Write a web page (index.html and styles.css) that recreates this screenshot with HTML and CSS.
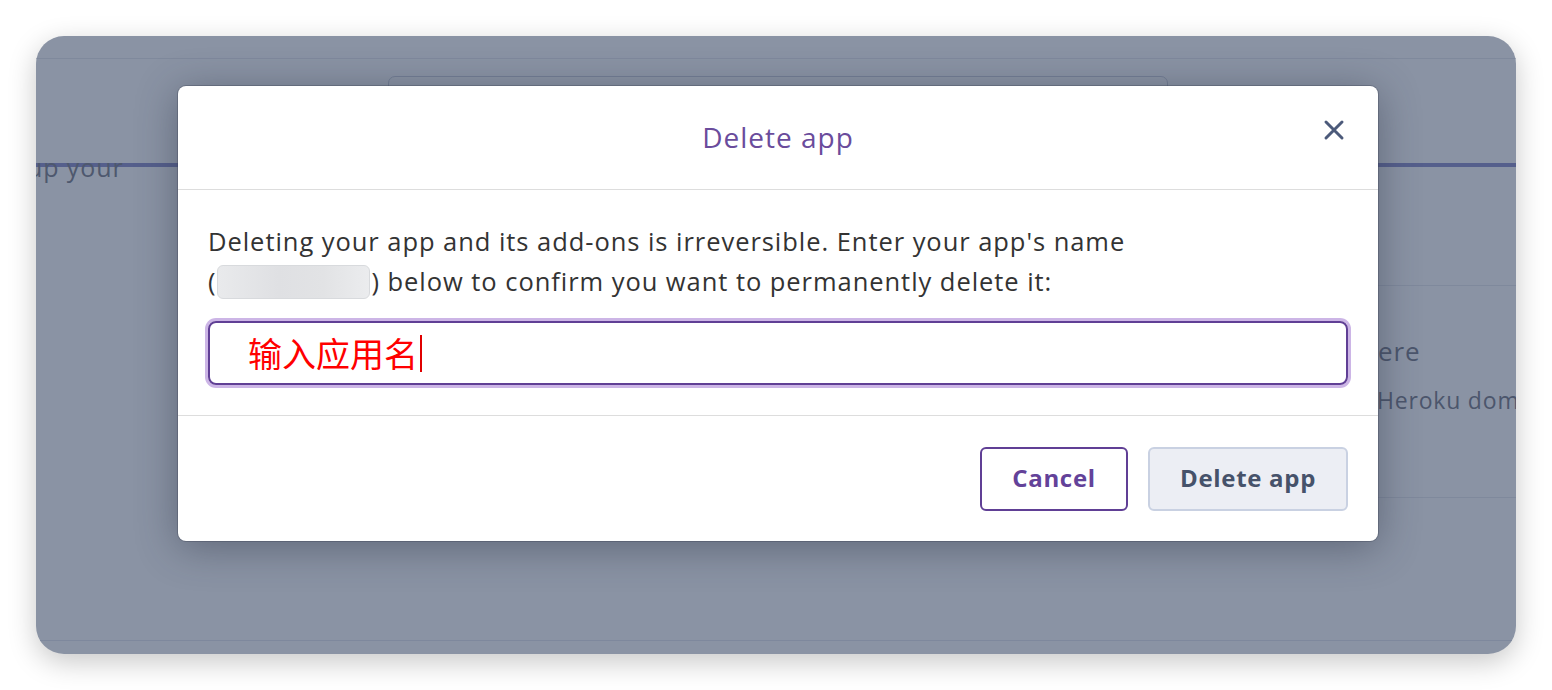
FILE: index.html
```html
<!DOCTYPE html>
<html lang="en">
<head>
<meta charset="utf-8">
<title>Delete app</title>
<link rel="stylesheet" href="styles.css">
</head>
<body>
<div class="window">
  <div class="bg">
    <div class="bg-top"></div>
    <div class="bg-search"></div>
    <div class="bg-heading"><span class="bg-text">up your</span></div>
    <div class="bg-main">
      <div class="bg-panel">
        <div class="bg-panel-title">ere</div>
        <div class="bg-panel-sub">Heroku dom</div>
      </div>
    </div>
    <div class="bg-bottom"></div>
  </div>

  <div class="modal" role="dialog" aria-labelledby="modal-title">
    <div class="modal-header">
      <h2 id="modal-title" class="modal-title">Delete app</h2>
      <button class="close" aria-label="Close">
        <svg width="22" height="22" viewBox="0 0 22 22"><path d="M3 3L19 19M19 3L3 19" stroke="#4c5a7a" stroke-width="3" stroke-linecap="round"/></svg>
      </button>
    </div>
    <div class="modal-body">
      <p class="msg">Deleting your app and its add-ons is irreversible. Enter your app's name<br>(<span class="redacted"></span>) below to confirm you want to permanently delete it:</p>
      <div class="input" role="textbox"><span class="typed">输入应用名</span><span class="caret"></span></div>
    </div>
    <div class="modal-footer">
      <button class="btn btn-cancel">Cancel</button>
      <button class="btn btn-delete">Delete app</button>
    </div>
  </div>
</div>
</body>
</html>
```

FILE: styles.css
```css
html, body {
  margin: 0;
  padding: 0;
  background: #ffffff;
}
body {
  width: 1552px;
  height: 690px;
  overflow: hidden;
  font-family: "Open Sans", "Noto Sans", "Noto Sans CJK SC", sans-serif;
}
.window {
  position: relative;
  margin: 36px;
  width: 1480px;
  height: 618px;
  border-radius: 28px;
  overflow: hidden;
  background: #8a93a4;
  box-shadow: 0 8px 28px rgba(0, 0, 0, 0.22);
}
.bg {
  display: flex;
  flex-direction: column;
  height: 100%;
}
.bg-top {
  height: 22px;
  border-bottom: 1px solid #7f899c;
  flex: none;
}
.bg-search {
  margin: 17px 0 0 352px;
  width: 778px;
  height: 40px;
  border: 1px solid #737e94;
  border-radius: 7px;
  flex: none;
}
.bg-heading {
  flex: none;
  height: 4px;
  margin-top: 45px;
  background: #555f8c;
  position: relative;
}
.bg-text {
  position: absolute;
  left: -9px;
  top: -12px;
  font-size: 25px;
  letter-spacing: 0.9px;
  color: #4e586e;
  line-height: 32px;
  white-space: nowrap;
}
.bg-main {
  flex: none;
  margin-top: 118px;
  display: flex;
  justify-content: flex-end;
}
.bg-panel {
  width: 138px;
  height: 213px;
  border-top: 1px solid #7f899c;
  border-bottom: 1px solid #7f899c;
  padding-top: 48px;
  box-sizing: border-box;
  color: #4c566c;
  white-space: nowrap;
  overflow: hidden;
}
.bg-panel-title {
  font-size: 26px;
  letter-spacing: 0.9px;
  line-height: 34px;
}
.bg-panel-sub {
  font-size: 23px;
  letter-spacing: 0.8px;
  line-height: 30px;
  margin-top: 17px;
  margin-left: -1px;
}
.bg-bottom {
  flex: none;
  margin-top: 142px;
  border-top: 1px solid #7e889d;
}

.modal {
  position: absolute;
  left: 142px;
  top: 50px;
  width: 1200px;
  height: 455px;
  background: #ffffff;
  border-radius: 8px;
  box-shadow: 0 0 0 1px rgba(60, 66, 84, 0.35), 0 6px 40px rgba(40, 46, 64, 0.45);
  display: flex;
  flex-direction: column;
  color: #333333;
}
.modal-header {
  position: relative;
  height: 104px;
  border-bottom: 1px solid #dddddd;
  display: flex;
  align-items: center;
  justify-content: center;
  flex: none;
  box-sizing: border-box;
}
.modal-title {
  margin: 0 0 2px;
  font-size: 28px;
  letter-spacing: 1px;
  line-height: 36px;
  font-weight: 400;
  color: #6a4c9c;
}
.close {
  position: absolute;
  right: 33px;
  top: 33px;
  width: 22px;
  height: 22px;
  padding: 0;
  border: 0;
  background: none;
  display: flex;
}
.modal-body {
  padding: 31px 30px 30px;
  border-bottom: 1px solid #dddddd;
  flex: none;
}
.msg {
  margin: 0;
  font-size: 25.5px;
  letter-spacing: 0.95px;
  line-height: 40px;
  color: #333333;
}
.redacted {
  display: inline-block;
  width: 151px;
  height: 32px;
  vertical-align: -8px;
  margin: 0 1px;
  background: linear-gradient(90deg, #e9eaec, #dfe0e3 40%, #e2e3e5 70%, #ebecee);
  border: 1px solid #d8dadd;
  border-radius: 6px;
}
.input {
  margin-top: 20px;
  height: 64px;
  box-sizing: border-box;
  border: 2px solid #603f95;
  border-radius: 8px;
  box-shadow: 0 0 0 3px #ccb5e6;
  display: flex;
  align-items: center;
  padding-left: 38px;
}
.typed {
  font-family: "Noto Sans CJK SC", sans-serif;
  font-size: 34px;
  color: #ff0000;
  line-height: 40px;
}
.caret {
  display: inline-block;
  width: 2px;
  height: 37px;
  background: #e00000;
  margin-left: 2px;
}
.modal-footer {
  flex: 1;
  display: flex;
  justify-content: flex-end;
  align-items: flex-start;
  padding: 31px 30px 0;
  gap: 20px;
}
.btn {
  height: 64px;
  border-radius: 6px;
  font-family: "Open Sans", "Noto Sans", sans-serif;
  font-size: 24px;
  letter-spacing: 0.7px;
  font-weight: 700;
  box-sizing: border-box;
  padding: 0 0 3px;
}
.btn-cancel {
  width: 148px;
  background: #ffffff;
  border: 2px solid #603f95;
  color: #634299;
}
.btn-delete {
  width: 200px;
  background: #eceef4;
  border: 2px solid #c9d1e2;
  color: #46526a;
}
```
